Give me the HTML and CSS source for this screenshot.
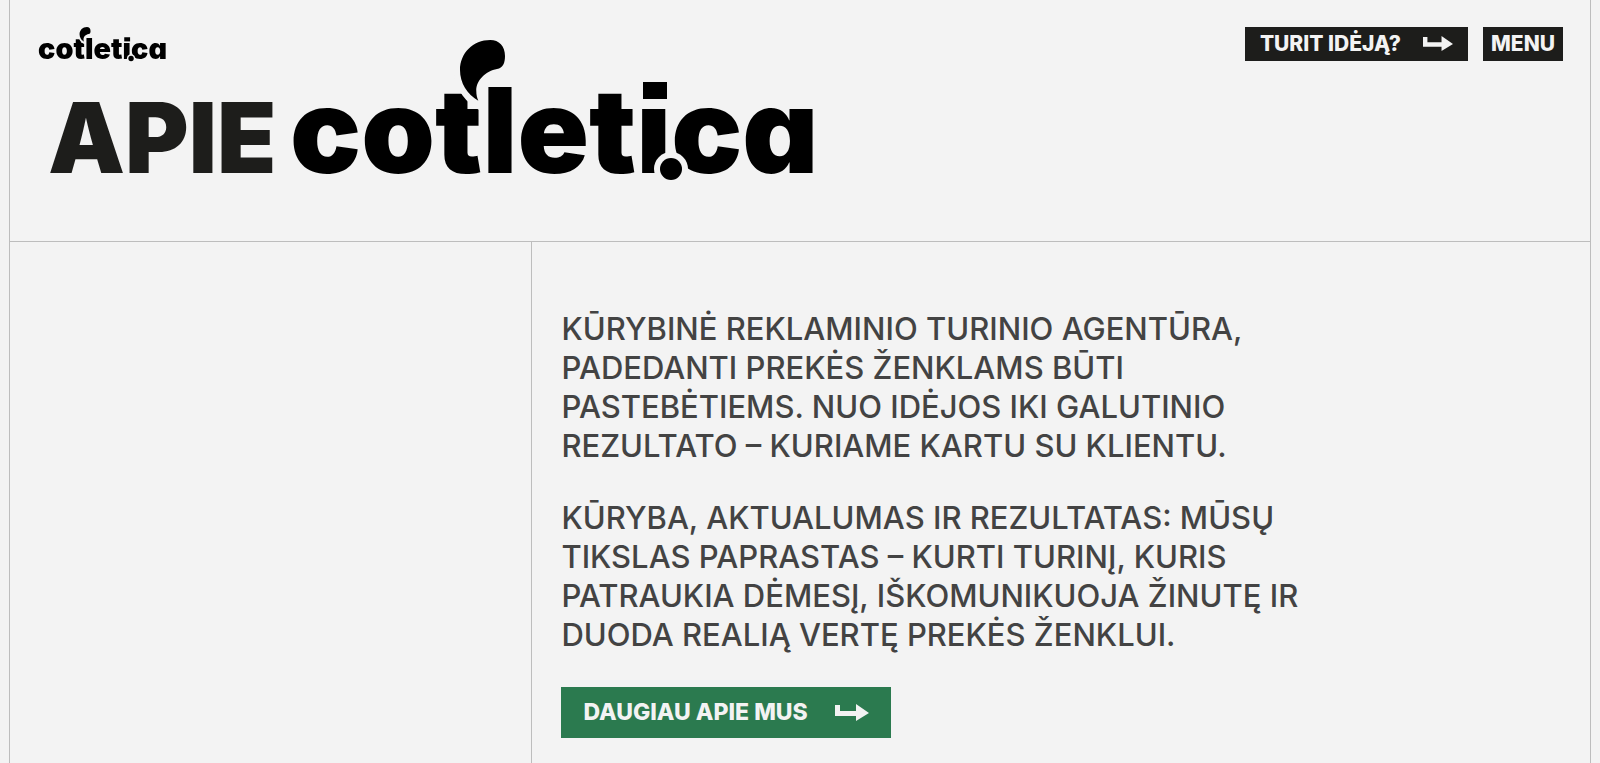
FILE: index.html
```html
<!DOCTYPE html>
<html lang="lt">
<head>
<meta charset="utf-8">
<meta name="viewport" content="width=device-width, initial-scale=1">
<title>Apie cotletica</title>
<link rel="stylesheet" href="styles.css">
</head>
<body>
<svg class="sprite" aria-hidden="true">
  <symbol id="arrow" viewBox="0 0 34 18">
    <path d="M0 1H5V7H21V0L34 9L21 17V12H0Z"/>
  </symbol>
</svg>
<div class="page">
  <header class="topbar">
    <a class="topbar-logo" href="#" aria-label="cotletica">
      <svg class="wordmark" viewBox="0 0 520 142">
        <text class="wordmark-text" x="-4" y="133">cotletica</text>
        <path class="wordmark-gap" d="M163 34C165 48 174 61 188 68"/>
        <path d="M184.300 60.700C173 54 166 43 166 30C166 13 179 0 196.300 0C205 0 211 6 211 16C211 23 209 28 203 29C192 31 182 40 182.300 51C182.300 55 183 58 184.300 60.700Z"/>
        <rect class="wordmark-halo" x="344" y="36" width="34" height="29"/>
        <rect x="349" y="42" width="24" height="17"/>
        <circle class="wordmark-halo" cx="377" cy="129" r="17"/>
        <circle cx="377" cy="129" r="11"/>
      </svg>
    </a>
    <nav class="topbar-nav">
      <a class="button" href="#">TURIT IDĖJĄ?<svg class="arrow"><use href="#arrow"/></svg></a>
      <button class="button button-menu" type="button">MENU</button>
    </nav>
  </header>
  <main>
    <section class="hero">
      <h1 class="hero-title">APIE
        <svg class="wordmark wordmark-large" viewBox="0 0 520 142" role="img" aria-label="cotletica">
          <text class="wordmark-text" x="-4" y="133">cotletica</text>
          <path class="wordmark-gap" d="M163 34C165 48 174 61 188 68"/>
          <path d="M184.300 60.700C173 54 166 43 166 30C166 13 179 0 196.300 0C205 0 211 6 211 16C211 23 209 28 203 29C192 31 182 40 182.300 51C182.300 55 183 58 184.300 60.700Z"/>
          <rect class="wordmark-halo" x="344" y="36" width="34" height="29"/>
          <rect x="349" y="42" width="24" height="17"/>
          <circle class="wordmark-halo" cx="377" cy="129" r="17"/>
          <circle cx="377" cy="129" r="11"/>
        </svg>
      </h1>
    </section>
    <section class="about">
      <div class="about-text">
        <p>KŪRYBINĖ REKLAMINIO TURINIO AGENTŪRA, PADEDANTI PREKĖS ŽENKLAMS BŪTI PASTEBĖTIEMS. NUO IDĖJOS IKI GALUTINIO REZULTATO – KURIAME KARTU SU KLIENTU.</p>
        <p>KŪRYBA, AKTUALUMAS IR REZULTATAS: MŪSŲ TIKSLAS PAPRASTAS – KURTI TURINĮ, KURIS PATRAUKIA DĖMESĮ, IŠKOMUNIKUOJA ŽINUTĘ IR DUODA REALIĄ VERTĘ PREKĖS ŽENKLUI.</p>
        <a class="button button-green" href="#">DAUGIAU APIE MUS<svg class="arrow"><use href="#arrow"/></svg></a>
      </div>
    </section>
  </main>
</div>
</body>
</html>
```
FILE: styles.css
```css
* {
  box-sizing: border-box;
}

body {
  margin: 0;
  background: #f3f3f3;
  color: #1d1d1b;
  font-family: Inter, "Liberation Sans", sans-serif;
}

.sprite {
  display: none;
}

.page {
  display: flex;
  flex-direction: column;
  min-height: 100vh;
  margin: 0 9px;
  border: solid #bdbdbd;
  border-width: 0 1px;
}

.page main {
  display: flex;
  flex: 1;
  flex-direction: column;
}

.topbar {
  position: fixed;
  top: 0;
  left: 10px;
  right: 10px;
  display: flex;
  justify-content: space-between;
  align-items: flex-start;
  padding: 27px 27px 0 29px;
}

.topbar-logo {
  color: #000;
}

.topbar-nav {
  display: flex;
  gap: 15px;
}

.wordmark {
  display: block;
  width: 127px;
  overflow: visible;
  color: #000;
  fill: currentColor;
}

.wordmark-large {
  width: 520px;
}

.wordmark-text {
  font-family: Inter, sans-serif;
  font-size: 118px;
  font-weight: 900;
  font-feature-settings: "cv11";
}

.wordmark-gap {
  fill: none;
  stroke: #f3f3f3;
  stroke-width: 6;
}

.wordmark-halo {
  fill: #f3f3f3;
}

.button {
  display: inline-flex;
  align-items: center;
  gap: 22px;
  padding: 4px 15px;
  border: 0;
  background: #1d1d1b;
  color: #f3f3f3;
  font: 800 21px/26px Inter, "Liberation Sans", sans-serif;
  text-decoration: none;
}

.button-menu {
  padding: 4px 8px;
}

.button-green {
  gap: 27px;
  padding: 10px 22px;
  background: #2b7a4f;
  font-size: 23px;
  line-height: 31px;
}

.arrow {
  width: 30px;
  height: 16px;
  fill: currentColor;
}

.button-green .arrow {
  width: 34px;
  height: 18px;
}

.hero {
  padding: 40px 38px 59px;
  border-bottom: 1px solid #bdbdbd;
}

.hero-title {
  display: flex;
  align-items: flex-end;
  gap: 18px;
  margin: 0;
  font-size: 97px;
  font-weight: 900;
  line-height: 88px;
}

.about {
  display: grid;
  flex: 1;
  grid-template-columns: 33% 1fr;
}

.about-text {
  grid-column: 2;
  padding: 67px 29px 24px;
  border-left: 1px solid #bdbdbd;
  color: #434343;
}

.about-text p {
  max-width: 760px;
  margin: 0 0 33px;
  font-size: 31px;
  font-weight: 500;
  line-height: 39px;
}
```
